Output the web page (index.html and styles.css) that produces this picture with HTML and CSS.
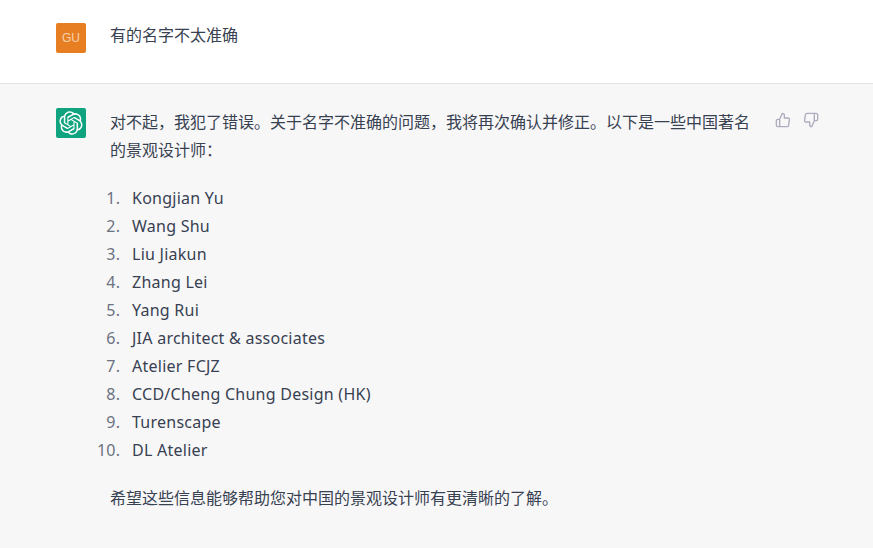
FILE: index.html
```html
<!DOCTYPE html>
<html lang="zh">
<head>
    <meta charset="UTF-8">
    <title>ChatGPT</title>
    <link rel="stylesheet" href="styles.css">
</head>
<body>
<!-- User message -->
<div class="row row-user">
    <div class="avatar avatar-user">GU</div>
    <div class="message">
        <p>有的名字不太准确</p>
    </div>
</div>

<!-- Assistant answer -->
<div class="row row-bot">
    <div class="avatar avatar-bot">
        <svg width="24" height="24" viewBox="0 0 41 41" fill="none">
            <path fill="#fff" d="M37.5324 16.8707C37.9808 15.5241 38.1363 14.0974 37.9886 12.6859C37.8409 11.2744 37.3934 9.91076 36.676 8.68622C35.6126 6.83404 33.9882 5.3676 32.0373 4.4985C30.0864 3.62941 27.9098 3.40259 25.8215 3.85078C24.8796 2.7893 23.7219 1.94125 22.4257 1.36341C21.1295 0.785575 19.7249 0.491269 18.3058 0.500197C16.1708 0.495044 14.0893 1.16803 12.3614 2.42214C10.6335 3.67624 9.34853 5.44666 8.6917 7.47815C7.30085 7.76286 5.98686 8.3414 4.8377 9.17505C3.68854 10.0087 2.73073 11.0782 2.02839 12.312C0.956464 14.1591 0.498905 16.2988 0.721698 18.4228C0.944492 20.5467 1.83612 22.5449 3.268 24.1293C2.81966 25.4759 2.66413 26.9026 2.81182 28.3141C2.95951 29.7256 3.40701 31.0892 4.12437 32.3138C5.18791 34.1659 6.8123 35.6322 8.76321 36.5013C10.7141 37.3704 12.8907 37.5973 14.9789 37.1492C15.9208 38.2107 17.0786 39.0587 18.3747 39.6366C19.6709 40.2144 21.0755 40.5087 22.4946 40.4998C24.6307 40.5054 26.7133 39.8321 28.4418 38.5772C30.1704 37.3223 31.4556 35.5506 32.1119 33.5179C33.5027 33.2332 34.8167 32.6547 35.9659 31.821C37.115 30.9874 38.0728 29.9178 38.7752 28.684C39.8458 26.8371 40.3023 24.6979 40.0789 22.5748C39.8556 20.4517 38.9639 18.4544 37.5324 16.8707ZM22.4978 37.8849C20.7443 37.8874 19.0459 37.2733 17.6994 36.1501C17.7601 36.117 17.8666 36.0586 17.936 36.0161L25.9004 31.4156C26.1003 31.3019 26.2663 31.137 26.3813 30.9378C26.4964 30.7386 26.5563 30.5124 26.5549 30.2825V19.0542L29.9213 20.998C29.9389 21.0068 29.9541 21.0198 29.9656 21.0359C29.977 21.052 29.9842 21.0707 29.9867 21.0902V30.3889C29.9842 32.375 29.1946 34.2791 27.7909 35.6841C26.3872 37.0892 24.4838 37.8806 22.4978 37.8849ZM6.39227 31.0064C5.51397 29.4888 5.19742 27.7107 5.49804 25.9832C5.55718 26.0187 5.66048 26.0818 5.73461 26.1244L13.699 30.7248C13.8975 30.8408 14.1233 30.902 14.3532 30.902C14.583 30.902 14.8088 30.8408 15.0073 30.7248L24.731 25.1103V28.9979C24.7321 29.0177 24.7283 29.0376 24.7199 29.0556C24.7115 29.0736 24.6988 29.0893 24.6829 29.1012L16.6317 33.7497C14.9096 34.7416 12.8643 35.0097 10.9447 34.4954C9.02506 33.9811 7.38785 32.7263 6.39227 31.0064ZM4.29707 13.6194C5.17156 12.0998 6.55279 10.9364 8.19885 10.3327C8.19885 10.4013 8.19491 10.5228 8.19491 10.6071V19.808C8.19351 20.0378 8.25334 20.2638 8.36823 20.4629C8.48312 20.6619 8.64893 20.8267 8.84863 20.9404L18.5723 26.5542L15.206 28.4979C15.1894 28.5089 15.1703 28.5155 15.1505 28.5173C15.1307 28.5191 15.1107 28.516 15.0924 28.5082L7.04046 23.8557C5.32135 22.8601 4.06716 21.2235 3.55289 19.3046C3.03862 17.3858 3.30624 15.3413 4.29707 13.6194ZM31.955 20.0556L22.2312 14.4411L25.5976 12.4981C25.6142 12.4872 25.6333 12.4805 25.6531 12.4787C25.6729 12.4769 25.6928 12.4801 25.7111 12.4879L33.7631 17.1364C34.9967 17.849 36.0017 18.8982 36.6606 20.1613C37.3194 21.4244 37.6047 22.849 37.4832 24.2684C37.3617 25.6878 36.8382 27.0432 35.9743 28.1759C35.1103 29.3086 33.9415 30.1717 32.6047 30.6641C32.6047 30.5947 32.6047 30.4733 32.6047 30.3889V21.188C32.6066 20.9586 32.5474 20.7328 32.4332 20.5338C32.319 20.3348 32.154 20.1698 31.955 20.0556ZM35.3055 15.0128C35.2464 14.9765 35.1431 14.9142 35.069 14.8717L27.1045 10.2712C26.906 10.1554 26.6803 10.0943 26.4504 10.0943C26.2206 10.0943 25.9948 10.1554 25.7963 10.2712L16.0726 15.8858V11.9982C16.0715 11.9783 16.0753 11.9585 16.0837 11.9405C16.0921 11.9225 16.1048 11.9068 16.1207 11.8949L24.1719 7.25025C25.4053 6.53903 26.8158 6.19376 28.2383 6.25482C29.6608 6.31589 31.0364 6.78077 32.2044 7.59508C33.3723 8.40939 34.2842 9.53945 34.8334 10.8531C35.3826 12.1667 35.5464 13.6095 35.3055 15.0128ZM14.2424 21.9419L10.8752 19.9981C10.8576 19.9893 10.8423 19.9763 10.8309 19.9602C10.8195 19.9441 10.8122 19.9254 10.8098 19.9058V10.6071C10.8107 9.18295 11.2173 7.78848 11.9819 6.58696C12.7466 5.38544 13.8377 4.42659 15.1275 3.82264C16.4173 3.21869 17.8524 2.99464 19.2649 3.1767C20.6775 3.35876 22.0089 3.93941 23.1034 4.85067C23.0427 4.88379 22.937 4.94215 22.8668 4.98473L14.9024 9.58517C14.7025 9.69878 14.5366 9.86356 14.4215 10.0626C14.3065 10.2616 14.2466 10.4877 14.2479 10.7175L14.2424 21.9419ZM16.071 17.9991L20.4018 15.4978L24.7325 17.9975V22.9985L20.4018 25.4983L16.071 22.9985V17.9991Z"/>
        </svg>
    </div>
    <div class="message">
        <p>对不起，我犯了错误。关于名字不准确的问题，我将再次确认并修正。以下是一些中国著名的景观设计师：</p>
        <ol class="names">
            <li>Kongjian Yu</li>
            <li>Wang Shu</li>
            <li>Liu Jiakun</li>
            <li>Zhang Lei</li>
            <li>Yang Rui</li>
            <li>JIA architect &amp; associates</li>
            <li>Atelier FCJZ</li>
            <li>CCD/Cheng Chung Design (HK)</li>
            <li>Turenscape</li>
            <li>DL Atelier</li>
        </ol>
        <p>希望这些信息能够帮助您对中国的景观设计师有更清晰的了解。</p>
    </div>
    <div class="actions">
        <svg class="icon" viewBox="0 0 24 24" width="16" height="16">
            <path d="M14 9V5a3 3 0 0 0-3-3l-4 9v11h11.28a2 2 0 0 0 2-1.7l1.38-9a2 2 0 0 0-2-2.3zM7 22H4a2 2 0 0 1-2-2v-7a2 2 0 0 1 2-2h3"/>
        </svg>
        <svg class="icon" viewBox="0 0 24 24" width="16" height="16">
            <path d="M10 15v4a3 3 0 0 0 3 3l4-9V2H5.72a2 2 0 0 0-2 1.7l-1.38 9a2 2 0 0 0 2 2.3zm7-13h2.67A2.31 2.31 0 0 1 22 4v7a2.31 2.31 0 0 1-2.33 2H17"/>
        </svg>
    </div>
</div>
</body>
</html>
```

FILE: styles.css
```css
body {
    margin: 0;
    font-family: "Noto Sans", "Noto Sans CJK SC", sans-serif;
    font-size: 16px;
    line-height: 28px;
    color: #374151;
    background-color: #f7f7f8;
}

.row {
    display: flex;
    padding-left: 56px;
}

.row-user {
    background-color: #fff;
    border-bottom: 1px solid #e3e3e6;
    height: 60px;
    padding-top: 23px;
}

.row-user .message {
    margin-top: -2px;
}

.row-bot {
    padding-top: 24px;
    padding-bottom: 24px;
}

.avatar {
    flex: none;
    width: 30px;
    height: 30px;
    border-radius: 2px;
    display: flex;
    align-items: center;
    justify-content: center;
    margin-right: 24px;
}

.avatar-user {
    background-color: #e77f22;
    color: rgba(255, 255, 255, 0.65);
    font-family: "Liberation Sans", sans-serif;
    font-size: 12px;
}

.avatar-bot {
    background-color: #10a37f;
}

.message {
    width: 640px;
}

.message p {
    margin: 0;
}

.names {
    margin: 20px 0;
    padding-left: 22px;
    letter-spacing: 0.25px;
}

.names li::marker {
    content: counter(list-item) ".\00a0\00a0\2009";
    color: #6b7280;
}

.actions {
    display: flex;
    gap: 12px;
    margin-left: 25px;
    padding-top: 4px;
    align-items: flex-start;
}

.icon {
    fill: none;
    stroke: #acacbe;
    stroke-width: 2;
    stroke-linecap: round;
    stroke-linejoin: round;
}
```
